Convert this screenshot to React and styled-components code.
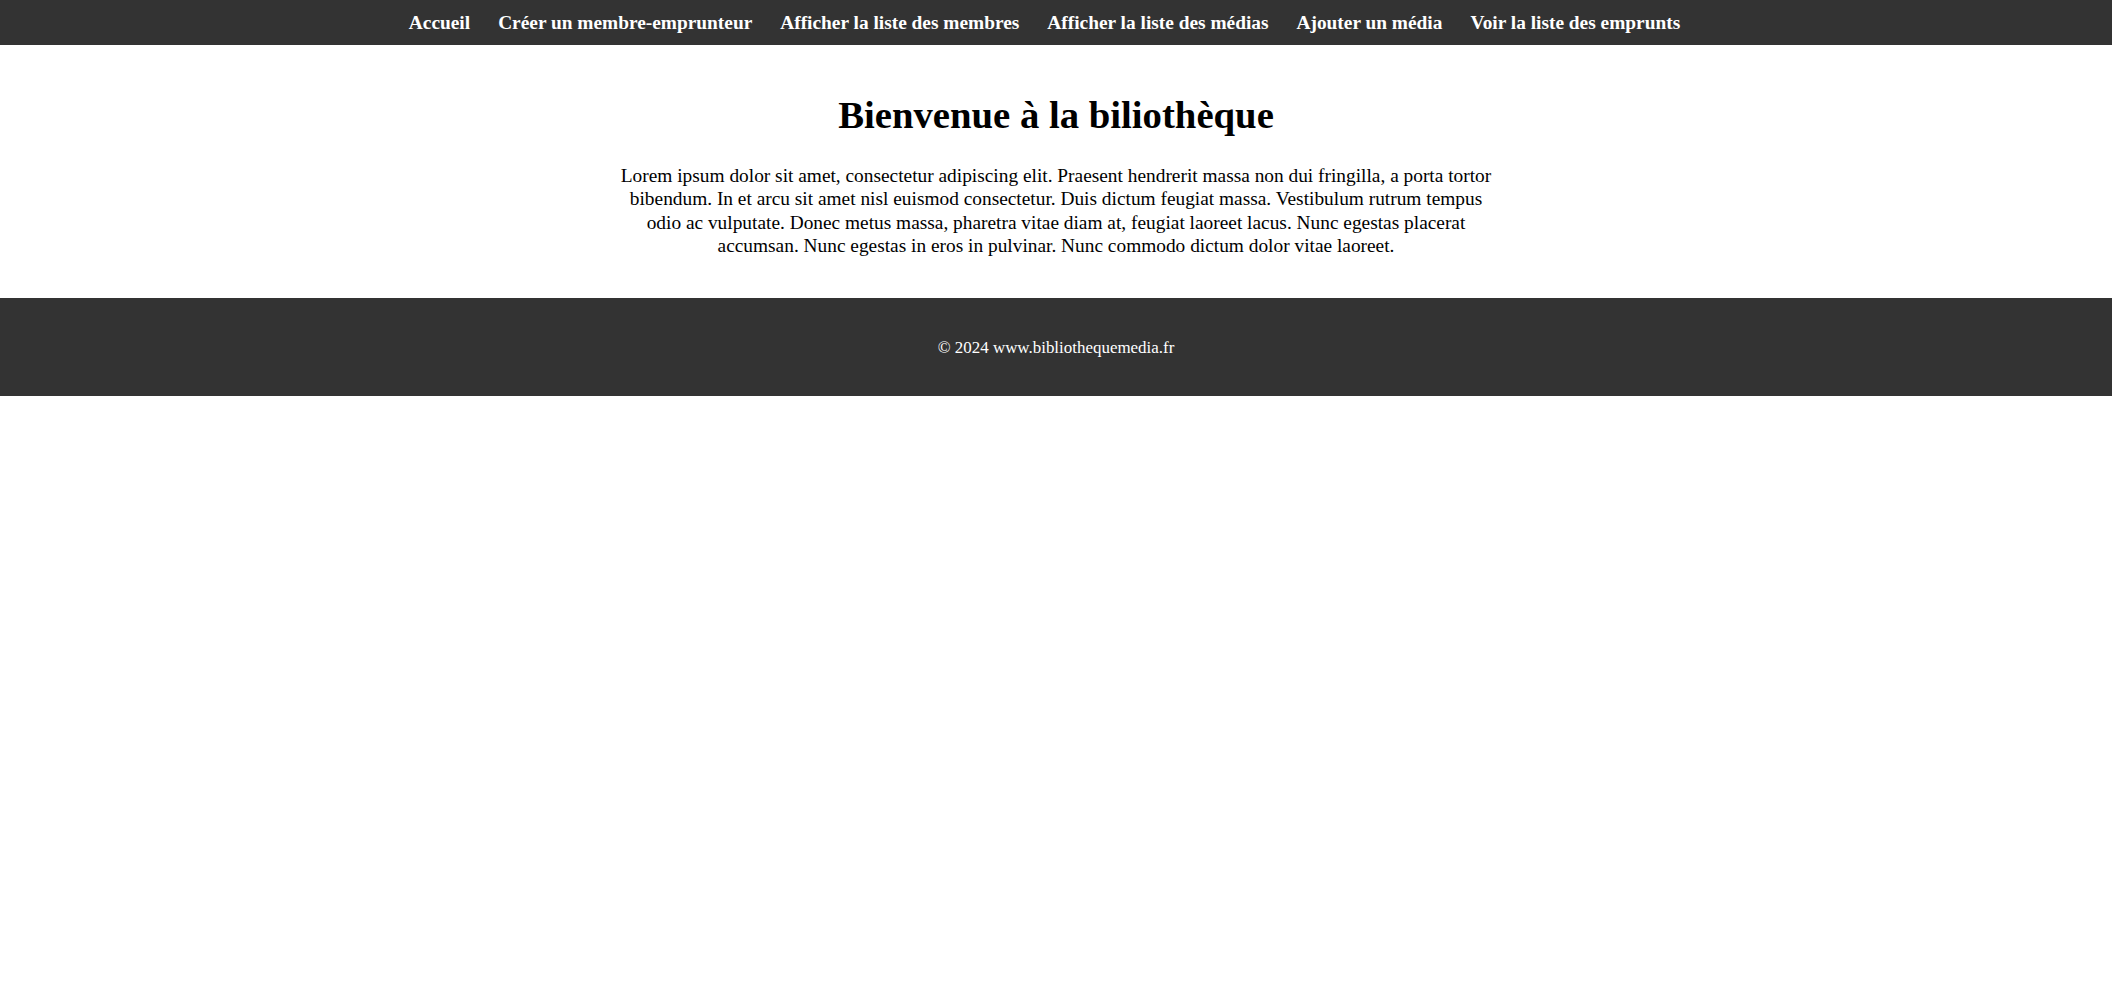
import React from "react"
import styled, { createGlobalStyle } from "styled-components"

const GlobalStyle = createGlobalStyle`
  body {
    margin: 0;
    font-family: "Liberation Serif", "Times New Roman", serif;
    background-color: #ffffff;
    color: #000000;
  }
`

const Header = styled.header`
  background-color: #333333;
`
const NavList = styled.ul`
  display: flex;
  justify-content: center;
  gap: 28px;
  list-style: none;
  margin: 0;
  padding: 12px 23px 11px 0;
`
const NavItem = styled.li`
  font-size: 19.36px;
  line-height: 22px;
`
const NavLink = styled.a`
  color: #ffffff;
  font-weight: 700;
  text-decoration: none;
  cursor: pointer;
`

const Main = styled.main`
  padding: 20px 0 20px;
  text-align: center;
`
const Title = styled.h1`
  font-size: 38.72px;
  font-weight: 700;
  margin: 27px 0 27px;
`
const Intro = styled.p`
  max-width: 880px;
  margin: 0 auto 21px;
  font-size: 19.36px;
  line-height: 23.3px;
`

const Footer = styled.footer`
  background-color: #333333;
  color: #ffffff;
  text-align: center;
  padding: 40px 0 38px;
  font-size: 16.94px;
`

const links = [
  "Accueil",
  "Créer un membre-emprunteur",
  "Afficher la liste des membres",
  "Afficher la liste des médias",
  "Ajouter un média",
  "Voir la liste des emprunts",
]

export default function App() {
  return (
    <>
      <GlobalStyle />
      <Header>
        <nav>
          <NavList>
            {links.map(label => (
              <NavItem key={label}>
                <NavLink>{label}</NavLink>
              </NavItem>
            ))}
          </NavList>
        </nav>
      </Header>
      <Main>
        <Title>Bienvenue à la biliothèque</Title>
        <Intro>
          Lorem ipsum dolor sit amet, consectetur adipiscing elit. Praesent
          hendrerit massa non dui fringilla, a porta tortor bibendum. In et
          arcu sit amet nisl euismod consectetur. Duis dictum feugiat massa.
          Vestibulum rutrum tempus odio ac vulputate. Donec metus massa,
          pharetra vitae diam at, feugiat laoreet lacus. Nunc egestas placerat
          accumsan. Nunc egestas in eros in pulvinar. Nunc commodo dictum dolor
          vitae laoreet.
        </Intro>
      </Main>
      <Footer>© 2024 www.bibliothequemedia.fr</Footer>
    </>
  )
}
